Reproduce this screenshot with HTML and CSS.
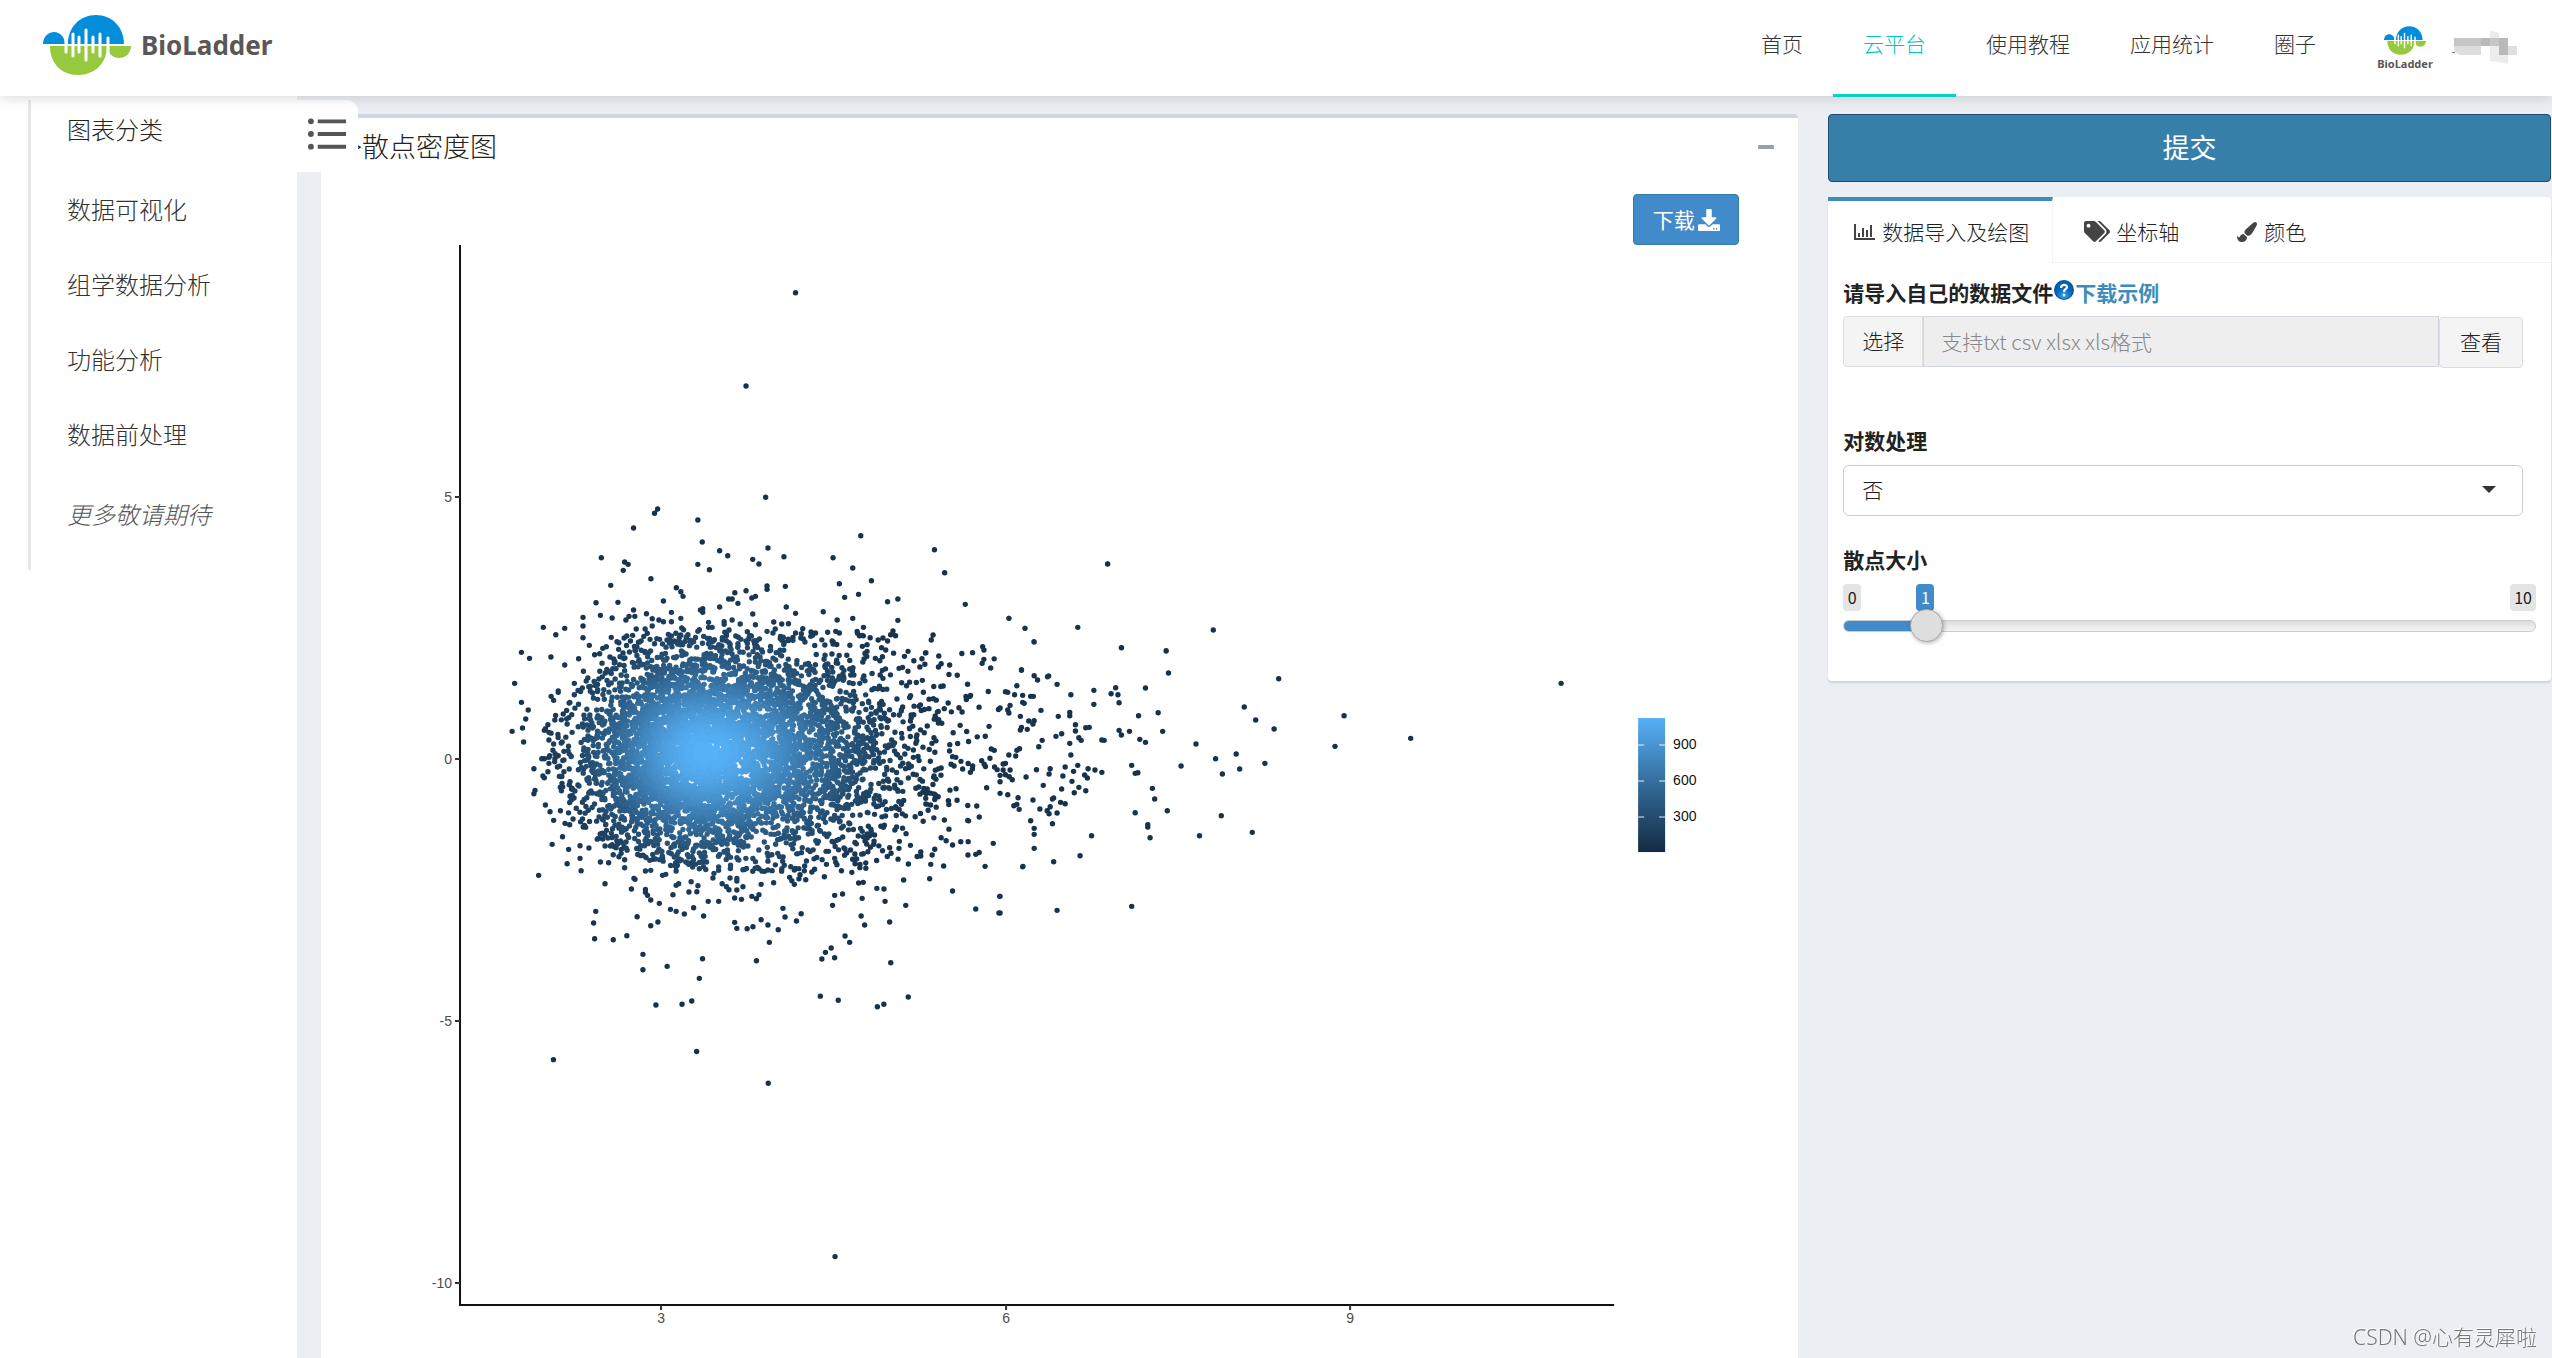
FILE: index.html
```html
<!DOCTYPE html>
<html lang="zh-CN">
<head>
<meta charset="utf-8">
<title>BioLadder - 散点密度图</title>
<link rel="stylesheet" href="styles.css">
</head>
<body>
<svg class="defs" aria-hidden="true">
  <symbol id="logo" viewBox="0 0 88 60">
    <path fill="#038ddb" d="M25 29C25 12 37 0 53 0s28 12 28 29zM0 29c0-7 5-12 11-12s11 5 11 12z"/>
    <path fill="#97c93c" d="M7 31h57c0 17-12 29-29 29S7 48 7 31zM65 31h23c0 7-5 12-12 12s-11-5-11-12z"/>
    <path stroke="#fff" stroke-width="3" stroke-linecap="round" d="M23 24v13M30 19v22M36 22v15M43 15v30M50 22v15M57 19v22M65 23v14"/>
  </symbol>
</svg>

<header class="topbar">
  <a class="brand" href="#"><svg class="brand-logo"><use href="#logo"/></svg>BioLadder</a>
  <nav class="nav">
    <a href="#">首页</a>
    <a class="active" href="#">云平台</a>
    <a href="#">使用教程</a>
    <a href="#">应用统计</a>
    <a href="#">圈子</a>
  </nav>
  <a class="avatar" href="#"><svg class="avatar-logo"><use href="#logo"/></svg><span>BioLadder</span></a>
  <svg class="username" viewBox="0 0 68 36" aria-label="用户">
    <path fill="#c6c6c6" d="M2 8h54v8H2z"/><path fill="#b9b9b9" d="M29 8h9v8h-9zM47 8h9v17h-9z"/>
    <path fill="#dedede" d="M2 16h27v9H8l-6-4zM56 16h9v9h-9z"/><path fill="#ececec" d="M38 0l9 3v5h-9zM38 16h9v16l-9-1zM47 25h9v9l-9-2z"/>
    <path fill="#777" d="M0 22h3v1H0z"/>
  </svg>
</header>

<div class="layout">
  <aside class="sidebar">
    <button class="toggle" type="button" aria-label="菜单">
      <svg viewBox="0 0 40 34"><path stroke="#555" stroke-width="4" d="M10 4h29M10 17h29M10 30h29"/><g fill="#555"><circle cx="3" cy="4" r="3"/><circle cx="3" cy="17" r="3"/><circle cx="3" cy="30" r="3"/></g></svg>
    </button>
    <nav class="menu">
      <h2>图表分类</h2>
      <a href="#">数据可视化</a>
      <a href="#">组学数据分析</a>
      <a href="#">功能分析</a>
      <a href="#">数据前处理</a>
      <em>更多敬请期待</em>
    </nav>
  </aside>

  <main class="content">
    <section class="box">
      <div class="box-header">
        <h1>-&gt;散点密度图</h1>
        <button class="collapse" type="button" aria-label="折叠"><span></span></button>
      </div>
      <div class="actions">
        <button class="download" type="button">下载<svg viewBox="0 0 512 512"><path fill="currentColor" d="M216 0h80c13.300 0 24 10.700 24 24v168h87.700c17.800 0 26.700 21.500 14.100 34.100L269.700 378.300c-7.500 7.500-19.800 7.500-27.300 0L90.100 226.100c-12.600-12.600-3.700-34.100 14.100-34.100H192V24c0-13.300 10.700-24 24-24zm296 376v112c0 13.300-10.700 24-24 24H24c-13.300 0-24-10.700-24-24V376c0-13.300 10.700-24 24-24h146.700l49 49c20.100 20.100 52.500 20.100 72.600 0l49-49H488c13.300 0 24 10.700 24 24zm-124 88c0-11-9-20-20-20s-20 9-20 20 9 20 20 20 20-9 20-20zm64 0c0-11-9-20-20-20s-20 9-20 20 9 20 20 20 20-9 20-20z"/></svg></button>
      </div>
      <svg class="plot" viewBox="321 245 1477 1113" role="img" aria-label="散点密度图">
        <defs><linearGradient id="scale" x1="0" y1="0" x2="0" y2="1"><stop offset="0" stop-color="#56b1f7"/><stop offset=".5" stop-color="#336a98"/><stop offset="1" stop-color="#132b43"/></linearGradient></defs>
        <g id="points" class="points"></g>
        <path class="axis" d="M460 245v1060h1154"/>
        <path class="ticks" d="M455 497h5M455 759h5M455 1021h5M455 1283h5M661 1305v5M1006 1305v5M1350 1305v5"/>
        <g class="ylabels"><text x="452" y="502">5</text><text x="452" y="764">0</text><text x="452" y="1026">-5</text><text x="452" y="1288">-10</text></g>
        <g class="xlabels"><text x="661" y="1323">3</text><text x="1006" y="1323">6</text><text x="1350" y="1323">9</text></g>
        <rect x="1638" y="718" width="27" height="134" fill="url(#scale)"/>
        <path class="legend-ticks" d="M1638 745h6M1659 745h6M1638 781h6M1659 781h6M1638 817h6M1659 817h6"/>
        <g class="legend"><text x="1673" y="749">900</text><text x="1673" y="785">600</text><text x="1673" y="821">300</text></g>
      </svg>
    </section>

    <section class="panel">
      <button class="submit" type="submit">提交</button>
      <div class="tabs-box">
        <div class="tabs">
          <a class="tab active" href="#"><svg class="icon" viewBox="0 0 22 20"><path fill="none" stroke="currentColor" stroke-width="2" d="M1 2v15h20"/><path stroke="currentColor" stroke-width="2" d="M5 11v4M9 6v9M13 8v7M17 3v12"/></svg>数据导入及绘图</a>
          <a class="tab" href="#"><svg class="icon wide" viewBox="0 0 640 512"><path fill="currentColor" d="M497.941 225.941L286.059 14.059A48 48 0 0 0 252.118 0H48C21.490 0 0 21.490 0 48v204.118a48 48 0 0 0 14.059 33.941l211.882 211.882c18.744 18.745 49.136 18.746 67.882 0l204.118-204.118c18.745-18.745 18.745-49.137 0-67.882zM112 160c-26.510 0-48-21.490-48-48s21.490-48 48-48 48 21.490 48 48-21.490 48-48 48zm513.941 133.823L421.823 497.941c-18.745 18.745-49.137 18.745-67.882 0l-.36-.36L527.640 323.522c16.999-16.999 26.362-39.600 26.362-63.640s-9.362-46.641-26.362-63.640L331.397 0h48.721a48 48 0 0 1 33.941 14.059l211.882 211.882c18.745 18.745 18.745 49.137 0 67.882z"/></svg>坐标轴</a>
          <a class="tab" href="#"><svg class="icon" viewBox="0 0 512 512"><path fill="currentColor" d="M167.020 309.340c-40.120 2.580-76.530 17.860-97.190 72.300-2.350 6.210-8 9.980-14.590 9.980-11.110 0-45.460-27.670-55.250-34.350C0 439.620 37.930 512 128 512c75.860 0 128-43.770 128-120.190 0-3.110-.65-6.080-.97-9.130l-88.010-73.340zM457.890 0c-15.160 0-29.370 6.710-40.210 16.450C213.270 199.050 192 203.340 192 257.090c0 13.700 3.250 26.760 8.730 38.700l63.820 53.180c7.210 1.800 14.640 3.030 22.390 3.030 62.110 0 98.110-45.470 211.160-256.460 7.380-14.350 13.900-29.850 13.900-45.990C512 20.640 486 0 457.890 0z"/></svg>颜色</a>
        </div>
        <form class="form">
          <div class="field file-field">
            <div class="label-row"><label for="file">请导入自己的数据文件</label><svg class="help" viewBox="0 0 20 20"><defs><radialGradient id="ball" cy=".85"><stop offset="0" stop-color="#2fa4e7"/><stop offset="1" stop-color="#0560b6"/></radialGradient></defs><circle cx="10" cy="10" r="10" fill="#0b4f96"/><circle cx="10" cy="10" r="9" fill="url(#ball)"/><path fill="none" stroke="#fff" stroke-width="2.200" d="M7 8c0-4 6-4 6-1 0 2-3 2-3 5"/><circle cx="10" cy="15" r="1.400" fill="#fff"/></svg><a href="#">下载示例</a></div>
            <div class="file-row">
              <button class="choose" type="button">选择</button>
              <input id="file" type="text" placeholder="支持txt csv xlsx xls格式" readonly>
              <button class="view" type="button">查看</button>
            </div>
          </div>
          <div class="field select-field">
            <label for="log">对数处理</label>
            <div class="select-wrap"><select id="log"><option>否</option><option>是</option></select></div>
          </div>
          <div class="field">
            <label for="size">散点大小</label>
            <div class="marks"><span>0</span><output for="size" style="left: 10%">1</output><span>10</span></div>
            <input id="size" class="slider" type="range" min="0" max="10" value="1">
          </div>
        </form>
      </div>
    </section>
  </main>
</div>
<div class="watermark">CSDN @心有灵犀啦</div>
<script src="plot.js"></script>
</body>
</html>
```
FILE: styles.css
```css
* { box-sizing: border-box; }
body {
  margin: 0;
  min-height: 100vh;
  display: flex;
  flex-direction: column;
  background: #fff;
  color: #222;
  font: 300 21px/30px "Noto Sans", "Noto Sans CJK SC", sans-serif;
}
h1, h2 { margin: 0; font-weight: 300; }
a { color: inherit; text-decoration: none; }
button, input, select { font: inherit; color: inherit; margin: 0; }
button { cursor: pointer; }
.defs { position: absolute; width: 0; height: 0; }

.topbar {
  position: relative;
  z-index: 2;
  display: flex;
  align-items: center;
  height: 96px;
  padding: 0 32px 0 43px;
  background: #fff;
  box-shadow: 0 2px 12px rgba(0, 0, 0, .15);
}
.brand {
  display: flex;
  align-items: center;
  gap: 10px;
  height: 90px;
  align-self: flex-start;
  font: 700 26px/30px "Noto Sans", sans-serif;
  color: #595757;
}
.brand-logo { width: 88px; height: 60px; }
.nav { display: flex; align-self: stretch; margin-left: auto; color: #333; }
.nav a { height: 97px; padding: 29px 30px 0; }
.nav .active { color: #00c4b8; border-bottom: 3px solid #0bd1c5; }
.avatar {
  display: flex;
  flex-direction: column;
  align-items: center;
  width: 56px;
  height: 54px;
  margin: 0 19px 0 31px;
  padding-top: 5px;
  color: #595757;
  font: 700 11px/18px "Noto Sans", sans-serif;
}
.avatar-logo { flex: none; width: 42px; height: 29px; }
.username { width: 68px; height: 36px; }

.layout { flex: 1; display: flex; }
.sidebar { position: relative; flex: none; width: 297px; padding: 4px 0 0 28px; }
.menu {
  display: flex;
  flex-direction: column;
  height: 470px;
  padding: 15px 0 0 36px;
  border-left: 3px solid #e7e7e7;
  color: #333;
  font-size: 24px;
  line-height: 30px;
}
.menu h2 { margin-bottom: 28px; font-size: 24px; color: #222; }
.menu a { height: 75px; padding-top: 22px; }
.menu em { padding-top: 27px; color: #555; }
.toggle {
  position: absolute;
  z-index: 1;
  left: 297px;
  top: 4px;
  width: 61px;
  height: 72px;
  padding: 0 0 4px 11px;
  border: 0;
  border-radius: 0 12px 0 0;
  background: #fff;
  text-align: left;
}
.toggle svg { display: block; width: 39px; height: 34px; }

.content {
  flex: 1;
  display: grid;
  grid-template-columns: minmax(0, 47fr) minmax(0, 23fr);
  gap: 30px;
  padding: 18px 1px 0 24px;
  background: #ebeff4;
}
.box {
  background: #fff;
  border-top: 4px solid #d2d6de;
  border-radius: 4px 4px 0 0;
  box-shadow: 0 1px 1px rgba(0, 0, 0, .1);
}
.box-header { display: flex; align-items: center; justify-content: space-between; height: 58px; padding: 0 22px 0 17px; }
.box-header h1 { font-size: 27px; line-height: 32px; }
.collapse { padding: 10px 2px; border: 0; background: none; }
.collapse span { display: block; width: 16px; height: 4px; border-radius: 1px; background: #97a0b3; }
.actions { display: flex; justify-content: flex-end; padding: 18px 59px 0 0; }
.download {
  display: flex;
  align-items: center;
  justify-content: center;
  gap: 3px;
  width: 106px;
  height: 51px;
  border: 1px solid #357ca5;
  border-radius: 4px;
  background: #428bca;
  color: #fff;
  font-weight: 400;
}
.download svg { width: 22px; height: 22px; }
.plot { display: block; width: 100%; }
.plot text { font: 400 14px "Liberation Sans", sans-serif; }
.points path { fill: none; stroke-width: 5.4; stroke-linecap: round; }
.axis { fill: none; stroke: #111; stroke-width: 2; }
.ticks { stroke: #333; stroke-width: 2; }
.ylabels { fill: #4d4d4d; text-anchor: end; }
.xlabels { fill: #4d4d4d; text-anchor: middle; }
.legend { fill: #111; }
.legend-ticks { stroke: #fff; stroke-opacity: .45; stroke-width: 2; }

.submit {
  display: block;
  width: 100%;
  height: 68px;
  margin-bottom: 15px;
  border: 1px solid #204d74;
  border-radius: 4px;
  background: #367fa9;
  color: #fff;
  font-size: 27px;
  font-weight: 400;
}
.tabs-box { background: #fff; border-radius: 4px; box-shadow: 0 2px 2px rgba(0, 0, 0, .12); }
.tabs { display: flex; height: 66px; border-bottom: 1px solid #f4f4f4; }
.tab { display: flex; align-items: center; gap: 6px; padding: 4px 27px 0; }
.tab .icon { color: #444; }
.tab + .tab { margin-right: 3px; }
.tab.active { height: 66px; padding: 0 23px 0 26px; border-top: 4px solid #3c8dbc; border-right: 1px solid #f4f4f4; background: #fff; }
.tab:nth-child(2) { padding-left: 31px; }
.icon { width: 22px; height: 20px; }
.icon.wide { width: 26px; height: 21px; }
.form { padding: 15px 15px 39px; }
.field label { display: block; font-weight: 700; }
.file-field { margin-right: 13px; }
.label-row { display: flex; align-items: center; margin-bottom: 8px; font-weight: 700; }
.label-row a { color: #3c8dbc; }
.help { width: 20px; height: 20px; margin: 0 1px 6px; }
.file-row { display: flex; height: 52px; margin-bottom: 58px; }
.file-row button { border: 1px solid #ddd; background: #f4f4f4; padding: 0 0 2px; }
.choose { width: 80px; height: 51px; border-radius: 4px 0 0 4px; }
.file-row input { flex: 1; min-width: 0; height: 51px; padding: 0 17px 2px; border: 1px solid #d2d6de; background: #eee; font-family: "Noto Sans CJK SC", sans-serif; }
.file-row input::placeholder { color: #888; opacity: 1; }
.file-row .view { width: 84px; height: 51px; align-self: flex-end; border-radius: 4px; }
.select-field { margin: 0 13px 29px 0; }
.select-wrap { position: relative; margin-top: 9px; }
.select-wrap::after {
  content: "";
  position: absolute;
  right: 27px;
  top: 21px;
  border: 7px solid transparent;
  border-top-color: #333;
  border-bottom: 0;
  pointer-events: none;
}
.select-wrap select {
  display: block;
  width: 100%;
  height: 51px;
  padding: 0 18px 2px;
  appearance: none;
  border: 1px solid #ccc;
  border-radius: 6px;
  background: #fff;
}
.marks { position: relative; display: flex; justify-content: space-between; margin-top: 9px; font: 400 16px/27px "Noto Sans CJK SC", sans-serif; }
.marks span, .marks output { min-width: 18px; padding: 0 4px; border-radius: 4px; background: #e4e4e4; text-align: center; }
.marks output { position: absolute; top: 0; margin-left: 4px; background: #428bca; color: #fff; }
.slider { position: relative; display: block; width: 100%; height: 33px; margin-top: -2px; appearance: none; background: none; }
.slider::-webkit-slider-runnable-track {
  height: 12px;
  border: 1px solid #ccc;
  border-radius: 6px;
  background: linear-gradient(90deg, #428bca 12%, transparent 12%), linear-gradient(#ddd, #f5f5f5);
}
.slider::-webkit-slider-thumb {
  appearance: none;
  width: 33px;
  height: 33px;
  margin-top: -12px;
  border: 1px solid #aaa;
  border-radius: 50%;
  background: #dedede;
  box-shadow: 1px 1px 4px rgba(0, 0, 0, .3);
}

.watermark {
  position: fixed;
  right: 15px;
  bottom: 6px;
  color: #777;
  text-shadow: -1px -1px 0 #fff;
  font-weight: 300;
}
```
FILE: plot.js
```
// Sparse points by region: origin, units per pixel, then x,y pairs.
const regions = [
  { x: 1000, y: 520, sx: 2.613, sy: 3, pts: [
    281,132,23,295,65,325,203,322,89,366,317,383,557,330,434,393,440,459,728,476,1466,490,56,451,89,467,98,480,127,468,124,470,149,493,
    44,497,14,515,20,517,38,524,59,526,80,529,87,529,185,524,245,511,302,503,290,521,308,524,380,504,245,553,311,548,26,556,59,547,63,550,
    0,564,20,570,23,579,107,571,53,589,75,603,89,602,86,612,152,589,182,577,182,587,362,587,413,578,638,561,668,600,899,587,56,622,53,630,
    71,628,197,614,197,633,224,623,233,622,311,631,317,645,338,634,425,634,716,627,1073,655,146,649,161,641,110,661,101,680,206,653,212,661,
    182,670,266,660,272,661,365,658,380,667,512,672,875,679,51,686,44,691,23,705,41,708,185,705,563,716,617,702,626,747,692,730,8,732,14,730,
    8,750,26,750,0,766,14,764,24,770,32,779,68,771,95,749,131,746,128,762,170,741,203,736,192,754,164,768,230,746,248,750,266,757,221,765,
    228,774,344,736,353,760,360,758,473,738,581,762,188,784,113,796,161,807,206,802,194,818,224,812,398,805,404,837,0,785,0,820,20,824,47,833,
    86,840,140,834,137,837,44,853,36,857,50,868,104,867,131,860,123,872,128,881,149,879,158,847,170,851,80,902,137,911,89,925,89,943,89,985,
    353,878,437,872,386,914,386,921,392,953,578,887,521,947,659,937,239,947,209,1007,140,1025,59,1040,0,1129,0,1179,149,1171,344,1159] },
  { x: 500, y: 270, sx: 2.24, sy: 3, pts: [
    662,68,551,348,595,682,353,717,346,730,443,750,299,774,453,816,808,797,492,842,510,857,600,834,566,868,580,882,636,860,227,863,279,876,
    287,883,276,901,443,883,469,899,338,926,248,946,395,953,405,965,410,979,746,863,790,894,973,839,996,908,832,932,760,941,803,973,772,982,
    639,949,598,948,598,958,551,962,526,968,512,987,520,987,533,1000,564,984,572,979,215,998,264,997,366,993,868,995,891,987,1042,1003,
    1140,1045,1176,1075,1196,1115,1294,1072,1361,882,1392,1133,1492,1142,299,1020,225,1036,186,1042,251,1044,302,1039,289,1039,282,1050,
    328,1031,341,1046,356,1050,366,1055,384,1027,384,1055,405,1045,449,1020,454,1016,454,1027,492,1011,566,1032,641,1011,662,1030,724,1025,
    755,1050,790,1045,891,1051,467,1057,502,1055,502,1063,520,1050,538,1062,572,1064,613,1056,631,1062,646,1061,186,1068,97,1072,145,1075,
    125,1094,186,1103,48,1147,66,1165,114,1161,145,1185,814,1072,752,1084,760,1089,829,1103,847,1110,868,1113,880,1083,875,1094,886,1097,
    970,1095,1081,1130,1084,1140,914,1144,953,1149,945,1166,822,1144,1099,1194,1168,1199,988,1181,1007,1185,927,1172,
    200,1126,249,1102,262,1115,266,1118,278,1104,284,1098,292,1113,297,1096,305,1077,325,1077,330,1090,322,1099,336,1108,341,1068,377,1093,
    380,1108,386,1117,346,1121,364,1122,407,1074,411,1079,405,1096,421,1094,418,1100,443,1084,456,1099,469,1105,428,1120,467,1072,475,1072,
    513,1080,467,1121,498,1110,507,1112,490,1124,533,1121,554,1085,563,1098,572,1114,598,1084,606,1129,631,1111,656,1111,662,1089,675,1091,
    678,1076,683,1116,700,1096,746,1122,230,1135,238,1130,212,1154,223,1151,176,1166] },
  { x: 480, y: 540, sx: 2.8, sy: 3, pts: [
    97,430,116,487,135,510,128,537,119,564,90,574,122,606,151,686,154,751,151,761,183,795,196,815,225,812,206,841,238,850,251,854,231,890,
    202,913,248,928,280,917,280,955,244,971,283,992,164,1006,199,469,206,481,219,453,219,457,190,554,183,566,180,571,193,577,193,600,206,612,
    173,656,180,656,193,652,193,670,209,665,219,647,235,634,190,695,176,708,180,713,222,709,235,660,235,695,218,583,230,606,244,552,264,430,
    350,1031,337,966,360,968,405,983,431,1015,434,1018,424,1047,463,1048,463,1057,469,1066,478,1080,502,1090,463,993,478,991,511,1006,520,1003,
    549,993,549,1036,556,1031,540,1064,591,1025,610,1037,585,1056,607,1055,533,1108,549,1114,572,1122,598,1103,626,1128,639,1084,668,1084,
    614,986,655,1000,652,1014,668,991,700,1014,719,1015,719,1023,678,1031,690,1040,697,1049,719,1050,736,1040,713,1074,732,1078,761,1069,
    774,1076,781,1064,787,1033,822,1028,736,989,781,986,806,990,845,986,870,980,880,990,909,978,929,996,896,1004,867,1012,873,1022,880,1033,
    893,1016,912,1019,964,1010,970,973,996,967,1012,992,1041,997,1064,973,1060,1029,1073,1027,1111,1045,1131,1047,993,1066,1015,1062,987,1096,
    1070,1075,1134,1084,1192,1096,1186,1020,1259,1016,1323,1053,1262,973,1298,978,1414,979,1520,979,1455,1069,1388,1107,1453,1119,1067,1128,
    1077,1155,1147,1146,848,1105,854,1131,899,1121,886,1143,787,1139,806,1155,835,1169,748,1166,764,1160,719,1165,713,1147,810,1207,774,1262,
    623,1256,324,1114,318,1149,321,1196,373,1199,411,1187,440,1130,478,1157,498,1146,456,1243,456,1289,524,1279,614,1315,1022,1188,1035,1207,
    983,1224,967,1237,957,1257,993,1253,1150,1268,305,924,350,918,370,914,373,944,389,950,395,940,405,959,399,909,1045,958,1050,971,1073,941,
    1086,935,1127,932,1147,923,1173,925,1234,936,1234,948,1266,945,1366,945,1388,943,1437,910,1346,905,1323,915,1305,902,1291,893] },
  { x: 0, y: 0, sx: 0.6144, sy: 0.6144, pts: [
    340,651,428,646,472,665.5,513,772,403,617.5,419,617,425,615,504,612,515,614.5,539,618.5,543,617,558,612.5] }
];

// Seeded generator keeps the cloud identical on each load.
let seed = 20231;
function rnd() {
  seed = (seed + 0x6d2b79f5) | 0;
  let t = Math.imul(seed ^ (seed >>> 15), 1 | seed);
  t = (t + Math.imul(t ^ (t >>> 7), 61 | t)) ^ t;
  return ((t ^ (t >>> 14)) >>> 0) / 4294967296;
}
function normal() {
  return Math.sqrt(-2 * Math.log(1 - rnd())) * Math.cos(2 * Math.PI * rnd());
}

const points = [];
for (const r of regions) {
  for (let i = 0; i < r.pts.length; i += 2) {
    points.push([r.x + r.pts[i] / r.sx, r.y + r.pts[i + 1] / r.sy]);
  }
}
for (let i = 0; i < 6300; i++) {
  const n = Math.abs(normal());
  let x;
  if (rnd() < 0.36) x = 690 - n * 54;
  else x = 690 + (rnd() < 0.78 ? n * 100 : -Math.log(1 - rnd()) * 135);
  const y = 752 + normal() * (rnd() < 0.8 ? 52 : 76);
  const ex = Math.abs(x - 740) / (x < 740 ? 192 : 400), ey = Math.abs(y - 750) / 122;
  if (x > 1000 || Math.pow(ex, 2.3) + Math.pow(ey, 2.3) > 1) continue;
  points.push([x, y]);
}

const low = [19, 43, 67], high = [86, 177, 247], steps = 40;
const buckets = Array.from({ length: steps + 1 }, () => []);
for (const [x, y] of points) {
  const dx = (x - 704) / (x < 704 ? 68 : 92), dy = (y - 752) / 60;
  const t = 0.04 + 0.96 * Math.exp(-(dx * dx + dy * dy) / 2);
  buckets[Math.round(t * steps)].push(`M${x.toFixed(1)} ${y.toFixed(1)}h0`);
}
const group = document.getElementById("points");
buckets.forEach((b, i) => {
  if (!b.length) return;
  const path = document.createElementNS("http://www.w3.org/2000/svg", "path");
  path.setAttribute("d", b.join(""));
  path.setAttribute("stroke", `rgb(${low.map((c, k) => Math.round(c + (high[k] - c) * i / steps))})`);
  group.appendChild(path);
});
```
